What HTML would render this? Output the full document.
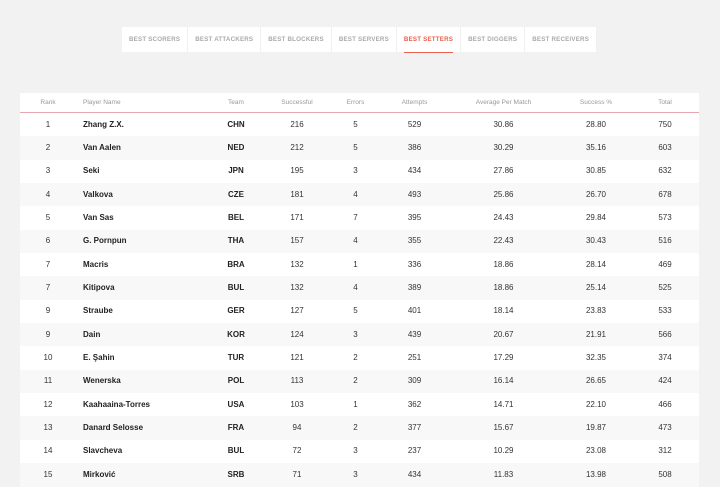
<!DOCTYPE html><html><head><meta charset="utf-8"><style>
body{margin:0;background:#f2f2f2;font-family:"Liberation Sans",sans-serif;width:720px;height:483px;overflow:hidden;position:relative}
.tabs{position:absolute;left:122px;top:27px;height:25px;display:flex;background:#fff}
.tabs div{font-size:6.2px;font-weight:bold;color:#aaa;letter-spacing:.2px;padding:0 7px;line-height:25px;border-right:1px solid #f0f0f0;position:relative}
.tabs .on{color:#e8604f}
.tabs .on:after{content:"";position:absolute;left:7px;right:7px;bottom:-1px;height:1.5px;background:#e8604f}
table{position:absolute;left:20px;top:93px;width:679px;border-collapse:collapse;background:#fff}
th{font-weight:normal;font-size:6.5px;color:#999;height:19px;padding:0;border-bottom:1px solid #e9a8b0;text-align:center}
td{font-size:8px;color:#333;height:23.35px;line-height:10px;text-align:center;padding:0}
tr:nth-child(even) td{background:#f8f8f8}
.p{text-align:left;font-weight:bold;color:#222;padding-left:7px}
.t{font-weight:bold;color:#222}
</style></head><body>
<div class="tabs"><div>BEST SCORERS</div><div>BEST ATTACKERS</div><div>BEST BLOCKERS</div><div>BEST SERVERS</div><div class="on">BEST SETTERS</div><div>BEST DIGGERS</div><div>BEST RECEIVERS</div></div>
<table>
<colgroup><col style="width:56px"><col style="width:130px"><col style="width:60px"><col style="width:62px"><col style="width:55px"><col style="width:63px"><col style="width:115px"><col style="width:70px"><col></colgroup>
<thead><tr><th>Rank</th><th class="p" style="font-weight:normal;color:#999">Player Name</th><th>Team</th><th>Successful</th><th>Errors</th><th>Attempts</th><th>Average Per Match</th><th>Success %</th><th>Total</th></tr></thead>
<tbody>
<tr><td>1</td><td class="p">Zhang Z.X.</td><td class="t">CHN</td><td>216</td><td>5</td><td>529</td><td>30.86</td><td>28.80</td><td>750</td></tr>
<tr><td>2</td><td class="p">Van Aalen</td><td class="t">NED</td><td>212</td><td>5</td><td>386</td><td>30.29</td><td>35.16</td><td>603</td></tr>
<tr><td>3</td><td class="p">Seki</td><td class="t">JPN</td><td>195</td><td>3</td><td>434</td><td>27.86</td><td>30.85</td><td>632</td></tr>
<tr><td>4</td><td class="p">Valkova</td><td class="t">CZE</td><td>181</td><td>4</td><td>493</td><td>25.86</td><td>26.70</td><td>678</td></tr>
<tr><td>5</td><td class="p">Van Sas</td><td class="t">BEL</td><td>171</td><td>7</td><td>395</td><td>24.43</td><td>29.84</td><td>573</td></tr>
<tr><td>6</td><td class="p">G. Pornpun</td><td class="t">THA</td><td>157</td><td>4</td><td>355</td><td>22.43</td><td>30.43</td><td>516</td></tr>
<tr><td>7</td><td class="p">Macris</td><td class="t">BRA</td><td>132</td><td>1</td><td>336</td><td>18.86</td><td>28.14</td><td>469</td></tr>
<tr><td>7</td><td class="p">Kitipova</td><td class="t">BUL</td><td>132</td><td>4</td><td>389</td><td>18.86</td><td>25.14</td><td>525</td></tr>
<tr><td>9</td><td class="p">Straube</td><td class="t">GER</td><td>127</td><td>5</td><td>401</td><td>18.14</td><td>23.83</td><td>533</td></tr>
<tr><td>9</td><td class="p">Dain</td><td class="t">KOR</td><td>124</td><td>3</td><td>439</td><td>20.67</td><td>21.91</td><td>566</td></tr>
<tr><td>10</td><td class="p">E. Şahin</td><td class="t">TUR</td><td>121</td><td>2</td><td>251</td><td>17.29</td><td>32.35</td><td>374</td></tr>
<tr><td>11</td><td class="p">Wenerska</td><td class="t">POL</td><td>113</td><td>2</td><td>309</td><td>16.14</td><td>26.65</td><td>424</td></tr>
<tr><td>12</td><td class="p">Kaahaaina-Torres</td><td class="t">USA</td><td>103</td><td>1</td><td>362</td><td>14.71</td><td>22.10</td><td>466</td></tr>
<tr><td>13</td><td class="p">Danard Selosse</td><td class="t">FRA</td><td>94</td><td>2</td><td>377</td><td>15.67</td><td>19.87</td><td>473</td></tr>
<tr><td>14</td><td class="p">Slavcheva</td><td class="t">BUL</td><td>72</td><td>3</td><td>237</td><td>10.29</td><td>23.08</td><td>312</td></tr>
<tr><td>15</td><td class="p">Mirković</td><td class="t">SRB</td><td>71</td><td>3</td><td>434</td><td>11.83</td><td>13.98</td><td>508</td></tr>
</tbody></table>
</body></html>
